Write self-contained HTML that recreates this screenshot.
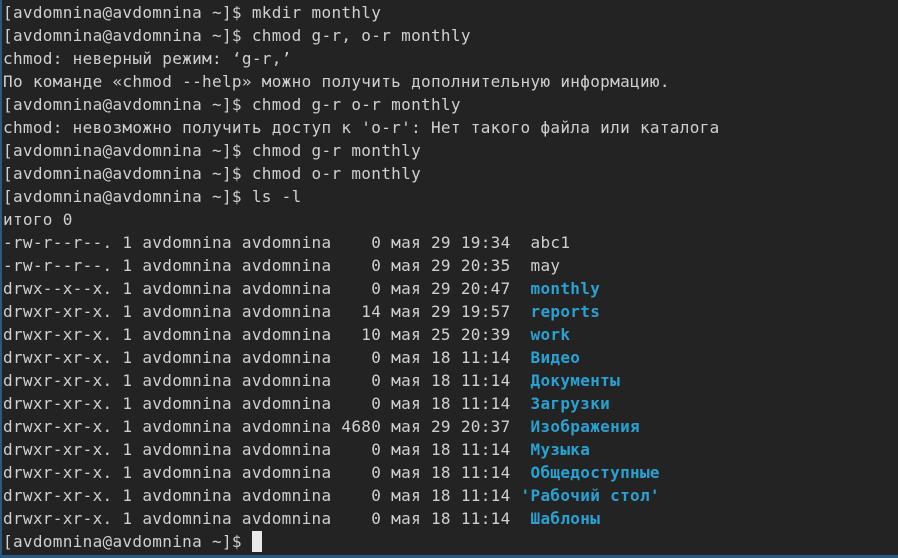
<!DOCTYPE html>
<html><head><meta charset="utf-8"><style>
html,body{margin:0;padding:0;background:#232323;width:898px;height:558px;overflow:hidden}
body{border-left:2px solid #2a5a80;box-sizing:border-box;position:relative}
pre{margin:0;padding:1px 0 0 1px;font-family:"DejaVu Sans Mono","Liberation Mono",monospace;font-size:16px;letter-spacing:0.32px;line-height:23px;color:#d0d0d0}
b{color:#2aa1d3;font-weight:bold}
.cur{display:inline-block;width:10px;height:21px;background:#e8e8e8;vertical-align:-5px}
.bl{position:absolute;left:0;right:0;bottom:0;height:3px;background:#2a5a80}
</style></head><body><pre>[avdomnina@avdomnina ~]$ mkdir monthly
[avdomnina@avdomnina ~]$ chmod g-r, o-r monthly
chmod: неверный режим: ‘g-r,’
По команде «chmod --help» можно получить дополнительную информацию.
[avdomnina@avdomnina ~]$ chmod g-r o-r monthly
chmod: невозможно получить доступ к 'o-r': Нет такого файла или каталога
[avdomnina@avdomnina ~]$ chmod g-r monthly
[avdomnina@avdomnina ~]$ chmod o-r monthly
[avdomnina@avdomnina ~]$ ls -l
итого 0
-rw-r--r--. 1 avdomnina avdomnina    0 мая 29 19:34  abc1
-rw-r--r--. 1 avdomnina avdomnina    0 мая 29 20:35  may
drwx--x--x. 1 avdomnina avdomnina    0 мая 29 20:47  <b>monthly</b>
drwxr-xr-x. 1 avdomnina avdomnina   14 мая 29 19:57  <b>reports</b>
drwxr-xr-x. 1 avdomnina avdomnina   10 мая 25 20:39  <b>work</b>
drwxr-xr-x. 1 avdomnina avdomnina    0 мая 18 11:14  <b>Видео</b>
drwxr-xr-x. 1 avdomnina avdomnina    0 мая 18 11:14  <b>Документы</b>
drwxr-xr-x. 1 avdomnina avdomnina    0 мая 18 11:14  <b>Загрузки</b>
drwxr-xr-x. 1 avdomnina avdomnina 4680 мая 29 20:37  <b>Изображения</b>
drwxr-xr-x. 1 avdomnina avdomnina    0 мая 18 11:14  <b>Музыка</b>
drwxr-xr-x. 1 avdomnina avdomnina    0 мая 18 11:14  <b>Общедоступные</b>
drwxr-xr-x. 1 avdomnina avdomnina    0 мая 18 11:14 <b>'Рабочий стол'</b>
drwxr-xr-x. 1 avdomnina avdomnina    0 мая 18 11:14  <b>Шаблоны</b>
[avdomnina@avdomnina ~]$ <span class="cur"></span></pre><div class="bl"></div></body></html>
